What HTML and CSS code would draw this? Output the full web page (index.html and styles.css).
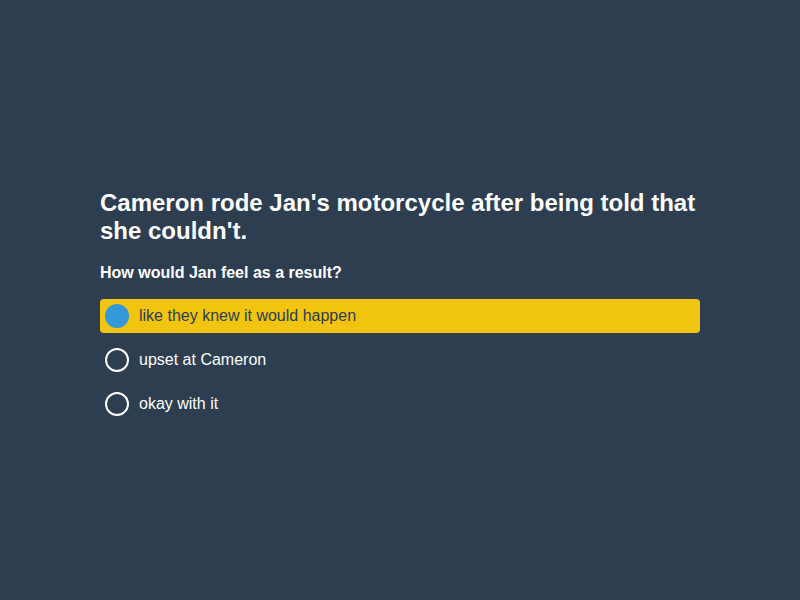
FILE: index.html
```html
<!DOCTYPE html>
<html>
<head>
<meta charset="utf-8">
<link rel="stylesheet" href="styles.css">
</head>
<body>
<main class="quiz">
  <h1 class="question">Cameron rode Jan's motorcycle after being told that she couldn't.</h1>
  <h2 class="prompt">How would Jan feel as a result?</h2>
  <ul class="options">
    <li class="option selected"><span class="radio"></span><span class="label">like they knew it would happen</span></li>
    <li class="option"><span class="radio"></span><span class="label">upset at Cameron</span></li>
    <li class="option"><span class="radio"></span><span class="label">okay with it</span></li>
  </ul>
</main>
</body>
</html>
```
FILE: styles.css
```css
html, body {
  margin: 0;
  padding: 0;
  height: 100%;
}
body {
  background: #2c3e50;
  font-family: "Liberation Sans", Arial, sans-serif;
  color: #ffffff;
  display: flex;
  align-items: center;
  justify-content: center;
}
.quiz {
  width: 600px;
  padding-top: 9px;
}
.question {
  font-size: 24px;
  line-height: 28px;
  font-weight: bold;
  margin: 0 0 18px 0;
}
.prompt {
  font-size: 16px;
  line-height: 20px;
  font-weight: bold;
  margin: 0 0 16px 0;
}
.options {
  list-style: none;
  margin: 0;
  padding: 0;
  display: flex;
  flex-direction: column;
  gap: 10px;
}
.option {
  display: flex;
  align-items: center;
  height: 34px;
  padding: 0 5px;
  border-radius: 4px;
  font-size: 16px;
}
.option.selected {
  background: #f1c40f;
  color: #2c3e50;
}
.radio {
  width: 24px;
  height: 24px;
  box-sizing: border-box;
  border: 2px solid #ffffff;
  border-radius: 50%;
  margin-right: 10px;
  flex: none;
}
.selected .radio {
  background: #3498db;
  border-color: #3498db;
}
```
